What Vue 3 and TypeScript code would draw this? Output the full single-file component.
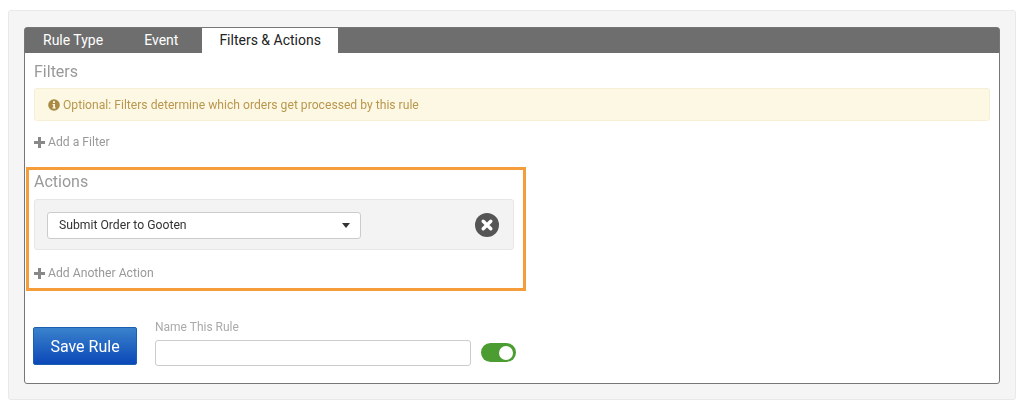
<script setup lang="ts">
const tabs: { label: string; active?: boolean }[] = [
  { label: 'Rule Type' },
  { label: 'Event' },
  { label: 'Filters & Actions', active: true },
]
</script>

<template>
  <div class="page">
    <div class="well">
      <div class="card">
        <div class="tabs">
          <div v-for="t in tabs" :key="t.label" class="tab" :class="{ active: t.active }">{{ t.label }}</div>
        </div>
        <div class="body">
          <h3 class="heading filters-h">Filters</h3>
          <div class="alert">
            <svg class="info" viewBox="0 0 12 12" width="12" height="12">
              <circle cx="6" cy="6" r="5.8" fill="#a98a45" />
              <rect x="5" y="2.2" width="2" height="1.8" fill="#fcf8e3" />
              <path d="M4.5 5h2.5v3.4h.8v1.1H4.3V8.4h.9V6.1h-.7z" fill="#fcf8e3" />
            </svg>
            <span>Optional: Filters determine which orders get processed by this rule</span>
          </div>
          <div class="add add-filter"><span class="plus"></span>Add a Filter</div>

          <div class="actions">
            <h3 class="heading">Actions</h3>
            <div class="action-row">
              <div class="select">
                <span>Submit Order to Gooten</span>
                <i class="caret"></i>
              </div>
              <svg class="remove" viewBox="0 0 24 24" width="24" height="24">
                <circle cx="12" cy="12" r="12" fill="#555" />
                <path d="M8.2 8.2l7.6 7.6M15.8 8.2l-7.6 7.6" stroke="#fff" stroke-width="3.4" stroke-linecap="round" />
              </svg>
            </div>
            <div class="add add-action"><span class="plus"></span>Add Another Action</div>
          </div>

          <div class="footer">
            <button class="save">Save Rule</button>
            <div class="name">
              <label>Name This Rule</label>
              <div class="input"></div>
            </div>
            <div class="toggle"><i></i></div>
          </div>
        </div>
      </div>
    </div>
  </div>
</template>

<style>
html, body { margin: 0; background: #fff; }
</style>

<style scoped>
.page {
  width: 1024px;
  height: 406px;
  box-sizing: border-box;
  padding: 10px 8px 6px 8px;
  font-family: Roboto, "Liberation Sans", sans-serif;
  overflow: hidden;
}
.well {
  height: 390px;
  box-sizing: border-box;
  background: #f5f5f5;
  border: 1px solid #e9e9e9;
  border-radius: 3px;
  padding: 16px 15px 16px 15px;
}
.card {
  height: 357px;
  box-sizing: border-box;
  background: #fff;
  border: 1px solid #777;
  border-radius: 3px;
  filter: blur(0.3px);
}
.tabs {
  display: flex;
  height: 25px;
  background: #6e6e6e;
  padding-left: 1px;
}
.tab {
  color: #fff;
  font-size: 14px;
  line-height: 25px;
  padding: 0 17px;
}
.tab:nth-child(2) { padding: 0 24px; }
.tab.active {
  background: #fff;
  color: #222;
  padding: 0 17px;
}
.body {
  position: relative;
  padding: 0 9px;
}
.heading {
  margin: 0;
  font-size: 16px;
  font-weight: 400;
  color: #999;
  line-height: 20px;
}
.filters-h { padding-top: 9px; }
.alert {
  display: flex;
  align-items: center;
  gap: 3px;
  height: 33px;
  box-sizing: border-box;
  margin-top: 6px;
  padding-left: 13px;
  background: #fcf8e3;
  border: 1px solid #f6efd6;
  border-radius: 3px;
  color: #b9974f;
  font-size: 12.15px;
}
.info { flex: none; }
.add {
  display: flex;
  align-items: center;
  gap: 3px;
  color: #999;
  font-size: 12.2px;
  line-height: 16px;
}
.plus {
  display: inline-block;
  width: 11px;
  height: 11px;
  background:
    linear-gradient(#888, #888) center / 11px 3px no-repeat,
    linear-gradient(#888, #888) center / 3px 11px no-repeat;
}
.add-filter { margin-top: 13px; }
.actions {
  position: relative;
  margin-top: 22px;
}
.actions::before {
  content: "";
  position: absolute;
  left: -8px;
  top: -5px;
  width: 500px;
  height: 124px;
  box-sizing: border-box;
  border: 3px solid #f59c3b;
  pointer-events: none;
}
.action-row {
  display: flex;
  align-items: center;
  justify-content: space-between;
  width: 480px;
  height: 51px;
  box-sizing: border-box;
  margin-top: 7px;
  padding: 0 14px 0 12px;
  background: #f3f3f3;
  border: 1px solid #e6e6e6;
  border-radius: 3px;
}
.select {
  display: flex;
  align-items: center;
  justify-content: space-between;
  width: 314px;
  height: 27px;
  box-sizing: border-box;
  margin-top: 1px;
  padding: 0 10px 0 11px;
  background: #fff;
  border: 1px solid #ccc;
  border-radius: 3px;
  color: #333;
  font-size: 12.2px;
}
.caret {
  width: 0;
  height: 0;
  border-left: 4.5px solid transparent;
  border-right: 4.5px solid transparent;
  border-top: 5px solid #333;
}
.remove { flex: none; margin-top: 1px; }
.add-action { margin-top: 15px; }
.footer {
  display: flex;
  align-items: flex-end;
  margin-top: 39px;
}
.save {
  width: 104px;
  height: 38px;
  margin: 0 18px 1px -1px;
  padding: 0;
  border: 1px solid #1a5fb0;
  border-radius: 2px;
  background: linear-gradient(#3a82cc, #0b48b8);
  color: #fff;
  font: 400 16px Roboto, "Liberation Sans", sans-serif;
}
.name { display: flex; flex-direction: column; }
.name label {
  color: #aaa;
  font-size: 12px;
  line-height: 14px;
  margin-bottom: 6px;
}
.input {
  width: 316px;
  height: 26px;
  box-sizing: border-box;
  background: #fff;
  border: 1px solid #ccc;
  border-radius: 3px;
}
.toggle {
  position: relative;
  width: 35px;
  height: 19px;
  margin: 0 0 4px 10px;
  border-radius: 10px;
  background: #4b9c31;
}
.toggle i {
  position: absolute;
  right: 3px;
  top: 2.5px;
  width: 14px;
  height: 14px;
  border-radius: 50%;
  background: #fff;
}
</style>
